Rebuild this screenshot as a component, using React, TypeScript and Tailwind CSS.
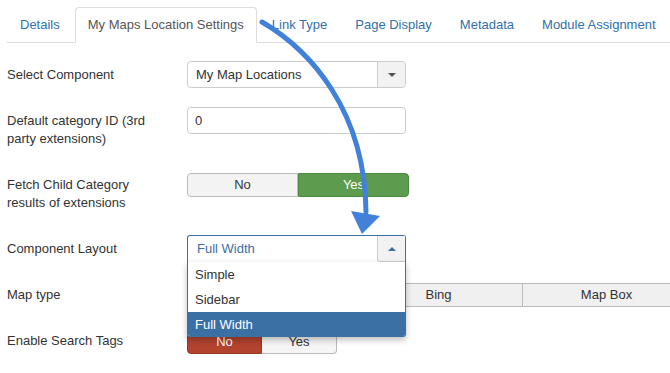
import React from "react";

const tabs = [
  "Details",
  "My Maps Location Settings",
  "Link Type",
  "Page Display",
  "Metadata",
  "Module Assignment",
];

function CaretDown() {
  return (
    <svg width="8" height="4" viewBox="0 0 8 4">
      <path d="M0 0 L8 0 L4 4 Z" fill="#555" />
    </svg>
  );
}

function CaretUp() {
  return (
    <svg width="8" height="4" viewBox="0 0 8 4">
      <path d="M0 4 L8 4 L4 0 Z" fill="#3b70a4" />
    </svg>
  );
}

export default function App() {
  return (
    <div
      className="relative w-[670px] h-[373px] overflow-hidden bg-white text-[13px] text-[#333]"
      style={{ fontFamily: '"Liberation Sans", Arial, sans-serif' }}
    >
      {/* Tabs */}
      <div className="ml-[7px] pt-[7px] flex border-b border-[#ddd] h-[43px] whitespace-nowrap">
        {tabs.map((t, i) => (
          <div
            key={t}
            className={
              i === 1
                ? "shrink-0 mr-[2px] h-[36px] px-[12px] flex items-center border border-[#ddd] border-b-white rounded-t-[4px] bg-white text-[#555] -mb-px"
                : "shrink-0 mr-[2px] h-[35px] px-[12px] flex items-center border border-transparent text-[#3071a9]"
            }
          >
            {t}
          </div>
        ))}
      </div>

      <div className="pl-[7px] mt-[18px]">
        {/* Row 1 */}
        <div className="flex h-[46px]">
          <div className="w-[180px] pt-[5px] leading-[18px]">Select Component</div>
          <div className="w-[219px] h-[27px] border border-[#ccc] rounded-[4px] flex bg-white">
            <div className="flex-1 pl-[8px] flex items-center">My Map Locations</div>
            <div className="w-[28px] border-l border-[#ccc] bg-[#f2f2f2] rounded-r-[4px] flex items-center justify-center">
              <CaretDown />
            </div>
          </div>
        </div>

        {/* Row 2 */}
        <div className="flex h-[66px]">
          <div className="w-[160px] mr-[20px] pt-[5px] leading-[18px]">
            Default category ID (3rd party extensions)
          </div>
          <div className="w-[219px] h-[27px] border border-[#ccc] rounded-[4px] pl-[7px] flex items-center">
            0
          </div>
        </div>

        {/* Row 3 */}
        <div className="flex h-[62px]">
          <div className="w-[160px] mr-[20px] pt-[3px] leading-[18px]">
            Fetch Child Category results of extensions
          </div>
          <div className="flex w-[222px] h-[24px]">
            <div className="flex-1 flex items-center justify-center border border-[#bbb] bg-[#f3f3f3] rounded-l-[4px]">
              No
            </div>
            <div className="flex-1 flex items-center justify-center border border-[#4a8a3f] bg-[#5d9c4f] text-white rounded-r-[4px]">
              Yes
            </div>
          </div>
        </div>

        {/* Row 4 */}
        <div className="flex h-[48px]">
          <div className="w-[180px] pt-[5px] leading-[18px]">Component Layout</div>
          <div className="relative w-[219px] h-[27px] z-10">
            <div className="h-[27px] border border-[#3b70a4] border-b-0 rounded-t-[3px] flex bg-white">
              <div className="flex-1 pl-[9px] flex items-center text-[#3b70a4]">Full Width</div>
              <div className="w-[28px] border-l border-b border-[#ccc] bg-[#f2f2f2] rounded-bl-[3px] flex items-center justify-center">
                <CaretUp />
              </div>
            </div>
            <div className="absolute left-0 top-[27px] w-[219px] bg-white border border-[#3b70a4] border-t-0 rounded-b-[3px] shadow-[0_3px_6px_rgba(0,0,0,0.25)] overflow-hidden">
              <div className="h-[25px] pl-[7px] flex items-center">Simple</div>
              <div className="h-[25px] pl-[7px] flex items-center">Sidebar</div>
              <div className="h-[24px] pl-[7px] pt-px flex items-center bg-[#3b70a4] text-white">Full Width</div>
            </div>
          </div>
        </div>

        {/* Row 5 */}
        <div className="flex h-[47px]">
          <div className="w-[180px] pt-[3px] leading-[18px] shrink-0">Map type</div>
          <div className="flex h-[24px] shrink-0">
            <div className="w-[168px] flex items-center justify-center border border-[#bbb] bg-[#f0f0f0] rounded-l-[4px]">
              Google
            </div>
            <div className="w-[168px] flex items-center justify-center border border-l-0 border-[#bbb] bg-[#f0f0f0]">
              Bing
            </div>
            <div className="w-[168px] flex items-center justify-center border border-l-0 border-[#bbb] bg-[#f0f0f0]">
              Map Box
            </div>
          </div>
        </div>

        {/* Row 6 */}
        <div className="flex h-[24px]">
          <div className="w-[180px] pt-[2px] leading-[18px]">Enable Search Tags</div>
          <div className="flex h-[24px]">
            <div className="w-[75px] flex items-center justify-center border border-[#9a3626] bg-[#b2432f] text-white rounded-l-[4px]">
              No
            </div>
            <div className="w-[75px] flex items-center justify-center border border-l-0 border-[#bbb] bg-[#f5f5f5] rounded-r-[4px]">
              Yes
            </div>
          </div>
        </div>
      </div>

      {/* Annotation arrow */}
      <svg
        className="absolute left-0 top-0 pointer-events-none z-20"
        width="670"
        height="373"
        viewBox="0 0 670 373"
      >
        <path
          d="M262 22 C310 50 365 110 366 212"
          fill="none"
          stroke="#4181d9"
          strokeWidth="5"
          strokeLinecap="round"
        />
        <path d="M351 211 L380 216 L362 234 Z" fill="#4181d9" />
      </svg>
    </div>
  );
}
